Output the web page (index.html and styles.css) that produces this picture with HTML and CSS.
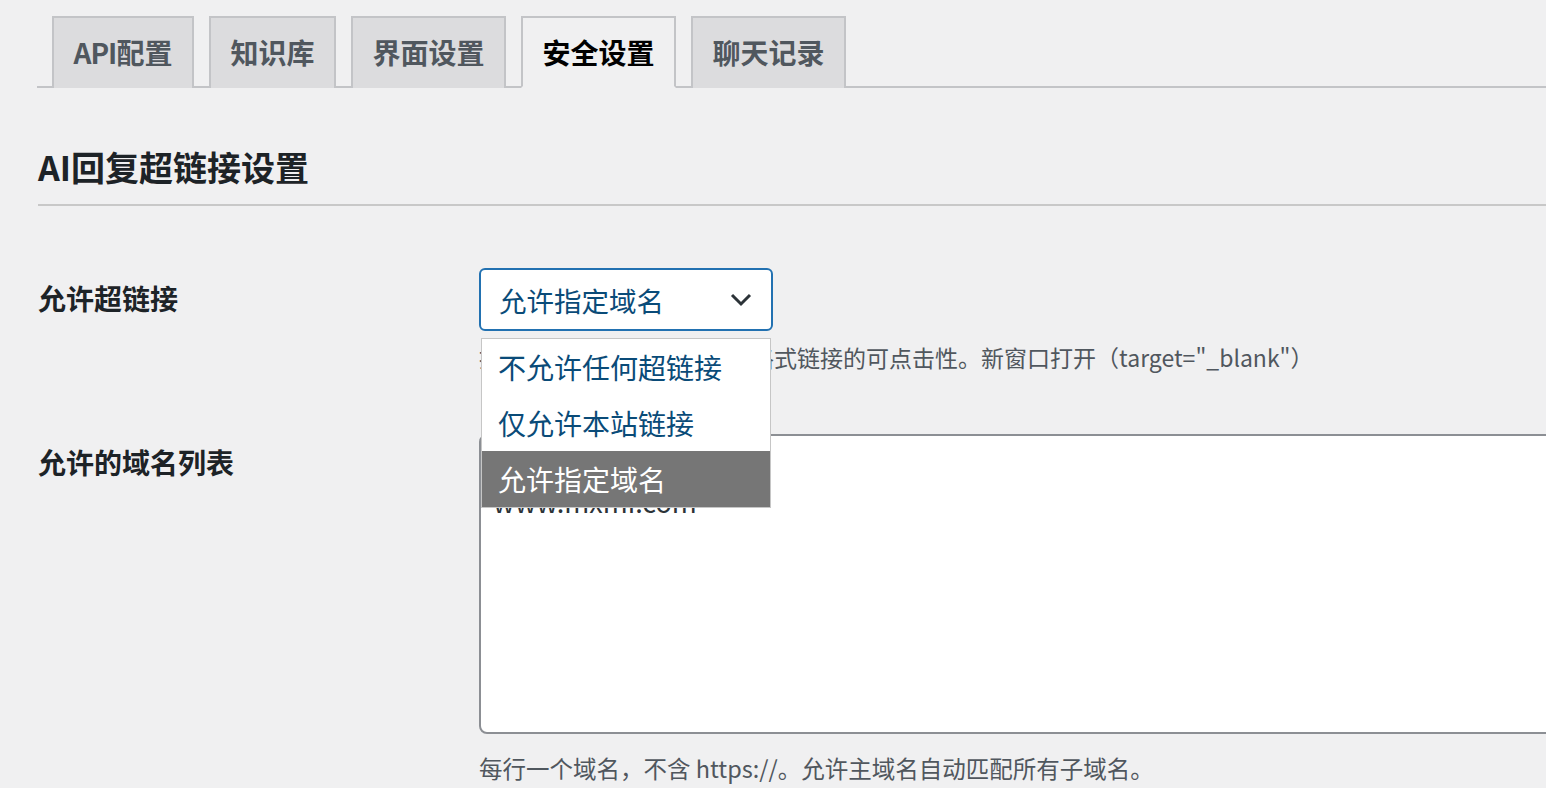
FILE: index.html
```html
<!DOCTYPE html>
<html lang="zh-CN">
<head>
<meta charset="utf-8">
<title>安全设置</title>
<link rel="stylesheet" href="styles.css">
</head>
<body>
<div class="wrap">
  <nav class="tabs">
    <a class="tab"><span class="latin">API</span>配置</a>
    <a class="tab">知识库</a>
    <a class="tab">界面设置</a>
    <a class="tab active">安全设置</a>
    <a class="tab">聊天记录</a>
  </nav>

  <h2 class="section-title">AI回复超链接设置</h2>

  <div class="form">
    <div class="row row-first">
      <div class="label">允许超链接</div>
      <div class="field">
        <div class="select-wrap">
          <div class="select">
            <span>允许指定域名</span>
            <svg class="chev" width="22" height="14" viewBox="0 0 22 14"><path d="M2 2 L11 11 L20 2" fill="none" stroke="#2c3338" stroke-width="3"/></svg>
          </div>
          <ul class="dropdown">
            <li>不允许任何超链接</li>
            <li>仅允许本站链接</li>
            <li class="sel">允许指定域名</li>
          </ul>
        </div>
        <p class="desc">控制AI回复中的Markdown格式链接的可点击性。新窗口打开（target="_blank"）</p>
      </div>
    </div>

    <div class="row row-second">
      <div class="label">允许的域名列表</div>
      <div class="field">
        <textarea class="domains" readonly>mxmi.com
www.mxmi.com</textarea>
        <p class="desc desc-bottom">每行一个域名，不含 https://。允许主域名自动匹配所有子域名。</p>
      </div>
    </div>
  </div>
</div>
</body>
</html>
```

FILE: styles.css
```css
html, body {
  margin: 0;
  padding: 0;
  overflow: hidden;
  background: #f0f0f1;
}
body {
  font-family: "Noto Sans CJK SC", "Noto Sans", sans-serif;
  color: #1d2327;
}
.wrap {
  padding: 16px 0 0 37px;
}
.tabs {
  display: flex;
  border-bottom: 2px solid #c3c4c7;
}
.tab {
  display: block;
  margin-left: 15px;
  margin-bottom: -2px;
  padding: 10px 19.5px;
  border: 2px solid #c3c4c7;
  border-bottom: none;
  background: #dcdcde;
  color: #50575e;
  font-size: 28px;
  font-weight: 700;
  line-height: 48px;
  box-sizing: border-box;
  height: 72px;
}
.tab .latin {
  letter-spacing: -1px;
}
.tab.active {
  background: #f0f0f1;
  color: #000;
  border-bottom: 2px solid #f0f0f1;
}
.section-title {
  margin: 57px 0 0 1px;
  padding-bottom: 15px;
  border-bottom: 2px solid #c8c8c8;
  font-size: 34px;
  font-weight: 700;
  line-height: 44px;
  color: #1d2327;
}
.form {
  margin-top: 32px;
  margin-left: 1px;
}
.row {
  display: grid;
  grid-template-columns: 420px 1fr;
}
.label {
  padding-top: 40px;
  font-size: 28px;
  font-weight: 700;
  line-height: 40px;
  color: #1d2327;
}
.row-second .label {
  padding-top: 38px;
}
.field {
  padding: 30px 20px 29px 21px;
}
.select-wrap {
  position: relative;
  width: 294px;
}
.select {
  box-sizing: border-box;
  height: 63px;
  border: 2px solid #2271b1;
  border-radius: 6px;
  background: #fff;
  display: flex;
  align-items: center;
  justify-content: space-between;
  padding: 0 19px 0 18px;
  font-size: 27.5px;
  color: #0a4b78;
}
.chev {
  display: block;
}
.dropdown {
  position: absolute;
  top: 70px;
  left: 2px;
  width: 290px;
  box-sizing: border-box;
  margin: 0;
  padding: 0;
  list-style: none;
  background: #fff;
  border: 1px solid #c6c6c6;
  z-index: 5;
}
.dropdown li {
  height: 56px;
  line-height: 56px;
  padding-left: 16px;
  font-size: 28px;
  color: #0a4b78;
}
.dropdown li.sel {
  background: #767676;
  color: #fff;
}
.desc {
  margin: 8px 0 0 0;
  font-size: 23px;
  line-height: 36px;
  color: #50575e;
  white-space: nowrap;
}
.desc-bottom {
  margin-top: 16px;
  font-size: 23.5px;
}
.domains {
  display: block;
  box-sizing: border-box;
  width: 1300px;
  height: 300px;
  margin: 0;
  border: 2px solid #8c8f94;
  border-radius: 8px;
  background: #fff;
  padding: 6px 12px;
  font-family: "Noto Sans CJK SC", "Noto Sans", sans-serif;
  font-size: 27px;
  line-height: 40px;
  color: #2c3338;
  resize: none;
  outline: none;
}
```
